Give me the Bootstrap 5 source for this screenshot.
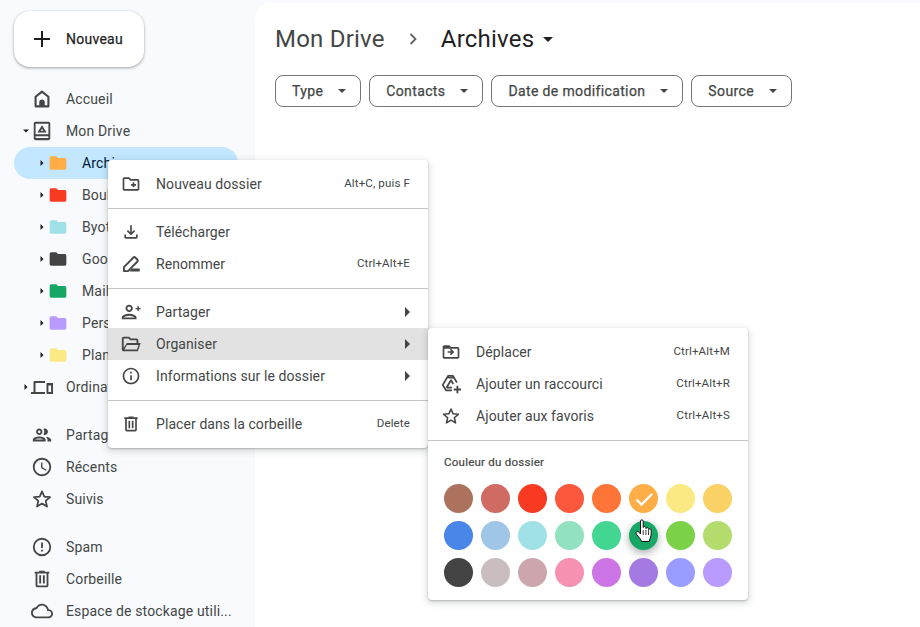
<!DOCTYPE html>
<html lang="fr">
<head>
  <meta charset="UTF-8">
  <title>Archives - Google Drive</title>
  <meta name="viewport" content="width=device-width, initial-scale=1">
  <link href="https://cdn.jsdelivr.net/npm/bootstrap@5.3.3/dist/css/bootstrap.min.css" rel="stylesheet">
  <style>
    body { background: #f8fafd; height: 627px; overflow: hidden; font-family: Roboto, "Liberation Sans", sans-serif; font-size: 14px; color: #1f1f1f; letter-spacing: .15px; }
    svg { display: block; flex: none; }
    .side-panel { width: 255px; padding: 11px 17px 0 14px; }
    .new-btn { width: 130px; height: 56px; border-radius: 16px; background: #fff; border: 0; box-shadow: 0 1px 2px rgba(60,64,67,.3), 0 1px 3px 1px rgba(60,64,67,.15); color: #1f1f1f; padding: 0 0 0 16px; gap: 12px; font-size: 14px; letter-spacing: .25px; margin-bottom: 16px; -webkit-text-stroke: .25px; }
    .side-group { margin-bottom: 16px; }
    .side-row { height: 32px; padding-left: 6px; color: #444746; border-radius: 16px; white-space: nowrap; }
    .side-row.sub { padding-left: 22px; }
    .side-row.on { background: #c2e7ff; color: #001d35; }
    .tw { width: 10px; flex: none; display: flex; justify-content: center; padding-left: 1px; color: #1f1f1f; }
    .ic { width: 24px; flex: none; display: flex; justify-content: center; margin-right: 12px; color: #444746; }
    .main-pane { background: #fff; border-top-left-radius: 16px; margin-top: 3px; padding: 18px 20px; height: 624px; }
    .crumb { font-size: 24px; line-height: 36px; letter-spacing: .22px; color: #444746; font-weight: 400; }
    .crumb-cur { color: #1f1f1f; }
    .crumb-sep { margin: 0 16px; }
    .chip-row { margin-top: 18px; }
    .chip-btn { height: 32px; border: 1px solid #747775; border-radius: 8px; background: #fff; color: #444746; font-size: 14px; padding: 0 14px 0 16px; gap: 15px; letter-spacing: .37px; -webkit-text-stroke: .25px; }
    .caret-d { width: 0; height: 0; border-left: 4.5px solid transparent; border-right: 4.5px solid transparent; border-top: 4.5px solid currentColor; }
    .caret-big { margin-left: 9px; border-left-width: 5px; border-right-width: 5px; border-top-width: 5px; }
    .pop-menu { --bs-dropdown-min-width: 0; width: 320px; left: 108px; border: 0; border-radius: 4px; padding: 8px 0; box-shadow: 0 2px 6px 2px rgba(60,64,67,.15), 0 1px 2px rgba(60,64,67,.3); font-size: 14px; color: #444746; letter-spacing: .08px; }
    .pop-one { top: 160px; height: 288px; z-index: 5; }
    .pop-two { left: 428px; top: 328px; height: 272px; z-index: 6; }
    .pop-menu .dropdown-item { height: 32px; padding: 0 18px 0 12px; color: #444746; }
    .pop-menu .dropdown-item.hov { background: #e2e2e2; }
    .pop-menu .dropdown-divider { margin: 8px 0 7px; border-color: #c7c7c7; opacity: 1; }
    .m-ic { width: 22px; margin-right: 14px; flex: none; display: flex; justify-content: center; color: #444746; }
    .keys { margin-left: auto; font-size: 11.5px; color: #444746; letter-spacing: .15px; }
    .arr-r { margin-left: auto; margin-right: 0; width: 0; height: 0; border-top: 5px solid transparent; border-bottom: 5px solid transparent; border-left: 5px solid #444746; }
    .color-title { font-size: 11.5px; padding: 6px 16px 0; line-height: 16px; color: #444746; letter-spacing: .25px; -webkit-text-stroke: .2px; }
    .swatches { display: grid; grid-template-columns: repeat(8, 29px); gap: 8px; padding: 14px 0 0 16px; }
    .swatch { width: 29px; height: 29px; border-radius: 50%; background: var(--c); }
    .swatch.lift { box-shadow: 0 3px 8px rgba(60,64,67,.45); }
    .hand-cur { position: absolute; left: 635px; top: 519px; z-index: 9; }
  </style>
</head>
<body>

<svg width="0" height="0" class="position-absolute">
  <symbol id="folder" viewBox="0 0 24 24"><path fill="currentColor" d="M10 4H4c-1.100 0-2 .9-2 2v12c0 1.100.9 2 2 2h16c1.100 0 2-.9 2-2V8c0-1.100-.9-2-2-2h-8l-2-2z"/></symbol>
  <symbol id="star" viewBox="0 0 24 24"><path fill="none" stroke="currentColor" stroke-width="1.900" stroke-linejoin="round" d="M12 3.600l2.500 5.800 6.300.6-4.800 4.100 1.500 6.200-5.500-3.300-5.500 3.300L8 14.100l-4.800-4.100 6.300-.6z"/></symbol>
  <symbol id="trash" viewBox="0 0 24 24"><path fill="currentColor" d="M15 4V3H9v1H4v2h1v13c0 1.100.9 2 2 2h10c1.100 0 2-.9 2-2V6h1V4h-5zm2 15H7V6h10v13zM9 8h2v9H9zm4 0h2v9h-2z"/></symbol>
  <symbol id="tri-r" viewBox="0 0 6 8"><path fill="currentColor" d="M1.500 1l3 3-3 3z"/></symbol>
  <symbol id="tri-d" viewBox="0 0 8 6"><path fill="currentColor" d="M1 1.500h6l-3 3z"/></symbol>
</svg>

<div class="d-flex">
  <aside class="side-panel flex-shrink-0">
    <button class="btn new-btn d-flex align-items-center">
      <svg width="24" height="24" viewBox="0 0 24 24"><path fill="#1f1f1f" d="M20 13h-7v7h-2v-7H4v-2h7V4h2v7h7z"/></svg>
      Nouveau
    </button>

    <div class="side-group">
      <div class="side-row d-flex align-items-center"><span class="tw"></span><span class="ic">
        <svg width="22" height="22" viewBox="0 0 24 24"><path fill="none" stroke="currentColor" stroke-width="2.300" stroke-linejoin="round" d="M12 4 5 9.500V20h14V9.500z"/><path fill="currentColor" d="M9 20v-4.500a3 3 0 0 1 6 0V20z"/></svg>
      </span>Accueil</div>
      <div class="side-row d-flex align-items-center"><span class="tw"><svg width="8" height="6"><use href="#tri-d"/></svg></span><span class="ic">
        <svg width="22" height="22" viewBox="0 0 24 24"><path fill="currentColor" fill-rule="evenodd" d="M5 2h14c1.100 0 2 .9 2 2v16c0 1.100-.9 2-2 2H5c-1.100 0-2-.9-2-2V4c0-1.100.9-2 2-2zm0 2.200v11.300h14V4.200zM5 17.800v1.900h14v-1.900z"/><path fill="currentColor" fill-rule="evenodd" d="M12 5.800 7 13.500h10zm0 3.700-1.500 2.300h3z"/></svg>
      </span>Mon Drive</div>
      <div class="side-row sub on d-flex align-items-center"><span class="tw"><svg width="6" height="8"><use href="#tri-r"/></svg></span><span class="ic" style="color:#ffad46"><svg width="20" height="20"><use href="#folder"/></svg></span>Archives</div>
      <div class="side-row sub d-flex align-items-center"><span class="tw"><svg width="6" height="8"><use href="#tri-r"/></svg></span><span class="ic" style="color:#f83a22"><svg width="20" height="20"><use href="#folder"/></svg></span>Boulot</div>
      <div class="side-row sub d-flex align-items-center"><span class="tw"><svg width="6" height="8"><use href="#tri-r"/></svg></span><span class="ic" style="color:#9fe1e7"><svg width="20" height="20"><use href="#folder"/></svg></span>Byothe</div>
      <div class="side-row sub d-flex align-items-center"><span class="tw"><svg width="6" height="8"><use href="#tri-r"/></svg></span><span class="ic" style="color:#434343"><svg width="20" height="20"><use href="#folder"/></svg></span>Google</div>
      <div class="side-row sub d-flex align-items-center"><span class="tw"><svg width="6" height="8"><use href="#tri-r"/></svg></span><span class="ic" style="color:#16a765"><svg width="20" height="20"><use href="#folder"/></svg></span>Mail</div>
      <div class="side-row sub d-flex align-items-center"><span class="tw"><svg width="6" height="8"><use href="#tri-r"/></svg></span><span class="ic" style="color:#b99aff"><svg width="20" height="20"><use href="#folder"/></svg></span>Perso</div>
      <div class="side-row sub d-flex align-items-center"><span class="tw"><svg width="6" height="8"><use href="#tri-r"/></svg></span><span class="ic" style="color:#fbe983"><svg width="20" height="20"><use href="#folder"/></svg></span>Plans</div>
      <div class="side-row d-flex align-items-center"><span class="tw"><svg width="6" height="8"><use href="#tri-r"/></svg></span><span class="ic">
        <svg width="24" height="24" viewBox="0 0 24 24"><path fill="currentColor" d="M4 6h11v2H5.500v9H15v2H1v-2h2.500V7.500C3.500 6.700 4 6 4 6z"/><path fill="currentColor" fill-rule="evenodd" d="M17.500 8H23v11h-5.500c-.6 0-1-.4-1-1V9c0-.6.4-1 1-1zm.9 2.500V17h2.700v-6.500z"/></svg>
      </span>Ordinateurs</div>
    </div>

    <div class="side-group">
      <div class="side-row d-flex align-items-center"><span class="tw"></span><span class="ic">
        <svg width="22" height="22" viewBox="0 0 24 24"><path fill="currentColor" d="M9 13.750c-2.340 0-7 1.170-7 3.500V19h14v-1.750c0-2.330-4.660-3.500-7-3.500zM4.340 17c.84-.58 2.870-1.250 4.660-1.250s3.820.67 4.660 1.250H4.340zM9 12c1.930 0 3.500-1.570 3.500-3.500S10.930 5 9 5 5.500 6.570 5.500 8.500 7.070 12 9 12zm0-5c.83 0 1.500.67 1.500 1.500S9.830 10 9 10s-1.500-.67-1.500-1.500S8.170 7 9 7zm7.040 6.810c1.160.84 1.960 1.960 1.960 3.440V19h4v-1.750c0-2.020-3.500-3.170-5.960-3.440zM15 12c1.930 0 3.500-1.570 3.500-3.500S16.930 5 15 5c-.54 0-1.040.13-1.500.35.630.89 1 1.980 1 3.150s-.37 2.260-1 3.150c.46.22.96.35 1.500.35z"/></svg>
      </span>Partagés avec moi</div>
      <div class="side-row d-flex align-items-center"><span class="tw"></span><span class="ic">
        <svg width="22" height="22" viewBox="0 0 24 24"><path fill="currentColor" d="M11.990 2C6.470 2 2 6.480 2 12s4.470 10 9.990 10C17.520 22 22 17.520 22 12S17.520 2 11.990 2zM12 20c-4.420 0-8-3.580-8-8s3.580-8 8-8 8 3.580 8 8-3.580 8-8 8zm.5-13H11v6l5.250 3.150.75-1.230-4.500-2.670z"/></svg>
      </span>Récents</div>
      <div class="side-row d-flex align-items-center"><span class="tw"></span><span class="ic"><svg width="22" height="22"><use href="#star"/></svg></span>Suivis</div>
    </div>

    <div>
      <div class="side-row d-flex align-items-center"><span class="tw"></span><span class="ic">
        <svg width="22" height="22" viewBox="0 0 24 24"><path fill="currentColor" d="M11 15h2v2h-2zm0-8h2v6h-2zM12 2a10 10 0 1 0 0 20 10 10 0 0 0 0-20zm0 18a8 8 0 1 1 0-16 8 8 0 0 1 0 16z"/></svg>
      </span>Spam</div>
      <div class="side-row d-flex align-items-center"><span class="tw"></span><span class="ic"><svg width="22" height="22"><use href="#trash"/></svg></span>Corbeille</div>
      <div class="side-row d-flex align-items-center"><span class="tw"></span><span class="ic">
        <svg width="22" height="22" viewBox="0 0 24 24"><path fill="currentColor" d="M19.350 10.040C18.670 6.590 15.640 4 12 4 9.110 4 6.600 5.640 5.350 8.040 2.340 8.360 0 10.910 0 14c0 3.310 2.690 6 6 6h13c2.760 0 5-2.240 5-5 0-2.640-2.050-4.780-4.650-4.960zM19 18H6c-2.210 0-4-1.790-4-4 0-2.050 1.530-3.760 3.560-3.970l1.070-.11.500-.95C8.080 7.140 9.940 6 12 6c2.620 0 4.880 1.860 5.390 4.430l.3 1.500 1.530.11c1.560.1 2.780 1.410 2.780 2.960 0 1.650-1.350 3-3 3z"/></svg>
      </span>Espace de stockage utili...</div>
    </div>
  </aside>

  <main class="main-pane flex-grow-1">
    <div class="crumb d-flex align-items-center">
      <span>Mon Drive</span>
      <svg class="crumb-sep" width="24" height="24" viewBox="0 0 24 24"><path fill="none" stroke="#5f6368" stroke-width="1.800" d="M9.500 7l5 5-5 5"/></svg>
      <span class="crumb-cur">Archives</span>
      <span class="caret-d caret-big crumb-cur"></span>
    </div>
    <div class="chip-row d-flex gap-2">
      <button class="btn chip-btn d-flex align-items-center">Type<span class="caret-d"></span></button>
      <button class="btn chip-btn d-flex align-items-center">Contacts<span class="caret-d"></span></button>
      <button class="btn chip-btn d-flex align-items-center">Date de modification<span class="caret-d"></span></button>
      <button class="btn chip-btn d-flex align-items-center">Source<span class="caret-d"></span></button>
    </div>
  </main>
</div>

<div class="dropdown-menu d-block position-absolute pop-menu pop-one">
  <div class="dropdown-item d-flex align-items-center"><span class="m-ic">
    <svg width="20" height="20" viewBox="0 0 24 24"><path fill="currentColor" d="M20 6h-8l-2-2H4c-1.100 0-2 .9-2 2v12c0 1.100.9 2 2 2h16c1.100 0 2-.9 2-2V8c0-1.100-.9-2-2-2zm0 12H4V6h5.170l2 2H20v10zm-8-4h2v2h2v-2h2v-2h-2v-2h-2v2h-2z"/></svg>
  </span>Nouveau dossier<span class="keys">Alt+C, puis F</span></div>
  <div class="dropdown-divider"></div>
  <div class="dropdown-item d-flex align-items-center"><span class="m-ic">
    <svg width="20" height="20" viewBox="0 0 24 24"><path fill="currentColor" d="M18 15v3H6v-3H4v3c0 1.100.9 2 2 2h12c1.100 0 2-.9 2-2v-3h-2zm-1-4l-1.410-1.410L13 12.170V4h-2v8.170L8.410 9.590 7 11l5 5 5-5z"/></svg>
  </span>Télécharger</div>
  <div class="dropdown-item d-flex align-items-center"><span class="m-ic">
    <svg width="20" height="20" viewBox="0 0 24 24"><path fill="none" stroke="currentColor" stroke-width="2.200" stroke-linejoin="round" d="M3.500 20.500v-4.800L15 4.200a1.500 1.500 0 0 1 2.100 0l2.700 2.700a1.500 1.500 0 0 1 0 2.100L8.300 20.500z"/><path fill="currentColor" d="M13 17.500h9.500v3.500H10z"/></svg>
  </span>Renommer<span class="keys">Ctrl+Alt+E</span></div>
  <div class="dropdown-divider"></div>
  <div class="dropdown-item d-flex align-items-center"><span class="m-ic">
    <svg width="22" height="22" viewBox="0 0 24 24"><path fill="currentColor" d="M10 12c2.210 0 4-1.790 4-4s-1.790-4-4-4-4 1.790-4 4 1.790 4 4 4zm0-6c1.100 0 2 .9 2 2s-.9 2-2 2-2-.9-2-2 .9-2 2-2zm0 8c-2.670 0-8 1.340-8 4v2h16v-2c0-2.660-5.330-4-8-4zm-6 4c.22-.72 3.310-2 6-2 2.700 0 5.800 1.290 6 2H4zM19 11V9h-2V7.500h2v-2h1.500v2h2V9h-2v2z"/></svg>
  </span>Partager<span class="arr-r"></span></div>
  <div class="dropdown-item hov d-flex align-items-center"><span class="m-ic">
    <svg width="22" height="22" viewBox="0 0 24 24"><path fill="currentColor" d="M20 6h-8l-2-2H4c-1.100 0-2 .9-2 2v12c0 1.100.9 2 2 2h15.500l3-9H20V8c0-1.100-.9-2-2-2zM4 6h5.200l2 2H18v3H7.500L4 16zm14.500 12H4.800l2.700-5h12.600z"/></svg>
  </span>Organiser<span class="arr-r"></span></div>
  <div class="dropdown-item d-flex align-items-center"><span class="m-ic">
    <svg width="20" height="20" viewBox="0 0 24 24"><path fill="currentColor" d="M11 7h2v2h-2zm0 4h2v6h-2zm1-9C6.480 2 2 6.480 2 12s4.480 10 10 10 10-4.480 10-10S17.520 2 12 2zm0 18c-4.410 0-8-3.590-8-8s3.590-8 8-8 8 3.590 8 8-3.590 8-8 8z"/></svg>
  </span>Informations sur le dossier<span class="arr-r"></span></div>
  <div class="dropdown-divider"></div>
  <div class="dropdown-item d-flex align-items-center"><span class="m-ic"><svg width="20" height="20"><use href="#trash"/></svg></span>Placer dans la corbeille<span class="keys">Delete</span></div>
</div>

<div class="dropdown-menu d-block position-absolute pop-menu pop-two">
  <div class="dropdown-item d-flex align-items-center"><span class="m-ic">
    <svg width="20" height="20" viewBox="0 0 24 24"><path fill="currentColor" d="M20 6h-8l-2-2H4c-1.100 0-2 .9-2 2v12c0 1.100.9 2 2 2h16c1.100 0 2-.9 2-2V8c0-1.100-.9-2-2-2zm0 12H4V8h16v10zm-8.010-9.990l-1.410 1.410L12.160 11H8v2h4.160l-1.590 1.590L11.990 16 16 12.010z"/></svg>
  </span>Déplacer<span class="keys">Ctrl+Alt+M</span></div>
  <div class="dropdown-item d-flex align-items-center"><span class="m-ic">
    <svg width="22" height="22" viewBox="0 0 24 24"><path fill="none" stroke="currentColor" stroke-width="1.900" stroke-linejoin="round" d="M13 19H6.500L3 13l6-10h5l4.500 7.500M9 5l6 0M7 16l5-8 2.500 4M7 16h6"/><path fill="currentColor" d="M18 14h2v3h3v2h-3v3h-2v-3h-3v-2h3z"/></svg>
  </span>Ajouter un raccourci<span class="keys">Ctrl+Alt+R</span></div>
  <div class="dropdown-item d-flex align-items-center"><span class="m-ic"><svg width="20" height="20"><use href="#star"/></svg></span>Ajouter aux favoris<span class="keys">Ctrl+Alt+S</span></div>
  <div class="dropdown-divider"></div>
  <div class="color-title">Couleur du dossier</div>
  <div class="swatches">
    <span class="swatch" style="--c:#ac725e"></span>
    <span class="swatch" style="--c:#d06b64"></span>
    <span class="swatch" style="--c:#f83a22"></span>
    <span class="swatch" style="--c:#fa573c"></span>
    <span class="swatch" style="--c:#ff7537"></span>
    <span class="swatch d-flex align-items-center justify-content-center" style="--c:#ffad46">
      <svg width="24" height="24" viewBox="0 0 24 24"><path fill="none" stroke="#fff" stroke-width="2.400" d="M4.500 12.500l5 5L20 7"/></svg>
    </span>
    <span class="swatch" style="--c:#fbe983"></span>
    <span class="swatch" style="--c:#fad165"></span>
    <span class="swatch" style="--c:#4986e7"></span>
    <span class="swatch" style="--c:#9fc6e7"></span>
    <span class="swatch" style="--c:#9fe1e7"></span>
    <span class="swatch" style="--c:#92e1c0"></span>
    <span class="swatch" style="--c:#42d692"></span>
    <span class="swatch lift" style="--c:#16a765"></span>
    <span class="swatch" style="--c:#7bd148"></span>
    <span class="swatch" style="--c:#b3dc6c"></span>
    <span class="swatch" style="--c:#434343"></span>
    <span class="swatch" style="--c:#cabdbf"></span>
    <span class="swatch" style="--c:#cca6ac"></span>
    <span class="swatch" style="--c:#f691b2"></span>
    <span class="swatch" style="--c:#cd74e6"></span>
    <span class="swatch" style="--c:#a47ae2"></span>
    <span class="swatch" style="--c:#9a9cff"></span>
    <span class="swatch" style="--c:#b99aff"></span>
  </div>
</div>

<svg class="hand-cur" width="19" height="25" viewBox="0 0 19 25">
  <path fill="#fff" stroke="#111" stroke-width="1" stroke-linejoin="round" d="M5.500 2c0-1.600 2.700-1.600 2.700 0v6.500c.2-1.300 2.400-1.300 2.600 0l.2 1c.3-1.200 2.300-1.100 2.500.1l.2.900c.5-1 2.300-.8 2.400.5.300 2.500.2 5-.6 7-.5 1.400-1 2.800-1.100 4.500H6.500c-.5-1.800-2.300-3.800-4.500-6.500-1.200-1.500-1.300-3-.3-3.500 1-.5 2.600.7 3.800 2.500z"/>
  <path stroke="#111" stroke-width=".8" d="M8.200 11v5M10.900 11v5M13.500 11v5"/>
</svg>

<script src="https://cdn.jsdelivr.net/npm/bootstrap@5.3.3/dist/js/bootstrap.bundle.min.js"></script>
</body>
</html>
